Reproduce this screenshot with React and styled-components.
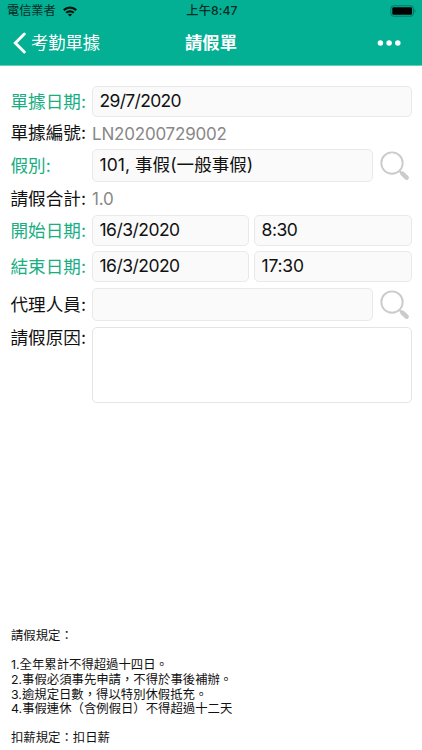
import React from "react";
import styled, { createGlobalStyle } from "styled-components";

const GlobalStyle = createGlobalStyle`
  * { box-sizing: border-box; }
  html, body { margin: 0; padding: 0; background: #fff; }
  body { font-family: Inter, "Noto Sans CJK TC", sans-serif; color: #111; }
`;

const Screen = styled.main`
  display: flex;
  flex-direction: column;
  width: 422px;
  height: 750px;
  overflow: hidden;
  background: #fff;
`;

const Header = styled.header`
  flex: none;
  height: 66px;
  background: #03b094;
  border-bottom: 1px solid #62cdbc;
`;

const StatusBar = styled.div`
  display: grid;
  grid-template-columns: 1fr auto 1fr;
  align-items: center;
  height: 22px;
  padding: 0 5px 0 7px;
  font-size: 12.2px;
  line-height: 22px;
  color: #062c26;
`;

const Carrier = styled.div`
  display: flex;
  align-items: center;
  gap: 7px;
`;

const Clock = styled.div`
  font-weight: 500;
  letter-spacing: 0.1px;
  white-space: nowrap;
`;

const BatterySlot = styled.div`
  display: flex;
  justify-content: flex-end;
`;

const NavBar = styled.nav`
  display: grid;
  grid-template-columns: 1fr auto 1fr;
  align-items: center;
  height: 42px;
  padding: 0 21px 0 12px;
  color: #fff;
`;

const BackButton = styled.button`
  display: flex;
  align-items: center;
  gap: 5px;
  padding: 0;
  border: 0;
  background: none;
  color: inherit;
  font: 400 17.3px/24px Inter, "Noto Sans CJK TC", sans-serif;
`;

const Title = styled.h1`
  margin: 0;
  padding-left: 9px;
  font-size: 17.3px;
  line-height: 24px;
  font-weight: 700;
`;

const MoreButton = styled.button`
  display: flex;
  justify-self: end;
  padding: 0;
  border: 0;
  background: none;
`;

const Form = styled.form`
  display: flex;
  flex-direction: column;
  padding: 20px 10px 0 10.5px;
`;

const Row = styled.div`
  display: grid;
  grid-template-columns: 75.5px 1fr;
  column-gap: 6px;
  align-items: ${(p) => (p.$top ? "start" : "center")};
  height: ${(p) => p.$height}px;
  margin-bottom: ${(p) => p.$gap || 0}px;
`;

const Label = styled.label`
  font-size: 17.6px;
  line-height: 22px;
  font-weight: 400;
  white-space: nowrap;
  color: ${(p) => (p.$required ? "#18ae82" : "#111")};
`;

const Value = styled.span`
  padding-top: 1px;
  font-size: 17px;
  line-height: 22px;
  letter-spacing: -0.2px;
  color: #888;
`;

const Fields = styled.div`
  display: grid;
  grid-template-columns: ${(p) => p.$columns || "1fr"};
  column-gap: ${(p) => p.$gap || 6}px;
  height: 100%;
  align-items: center;
`;

const Field = styled.div`
  display: flex;
  align-items: center;
  height: 100%;
  padding: 0 0 1px 6.5px;
  border: 1px solid #e9e9e9;
  border-radius: 5px;
  background: #fafafa;
  font-size: 17.5px;
  line-height: 22px;
  letter-spacing: ${(p) => p.$spacing || 0}px;
  white-space: nowrap;
`;

const TextArea = styled.textarea`
  display: block;
  width: 320px;
  height: 76px;
  padding: 6px;
  resize: none;
  outline: 0;
  border: 1px solid #e4e4e4;
  border-radius: 5px;
  background: #fff;
`;

const SearchButton = styled.button`
  display: flex;
  padding: 0;
  border: 0;
  background: none;
`;

const Rules = styled.section`
  margin-top: auto;
  padding: 0 10px 4px 11px;
  font-size: 12.37px;
  line-height: 14.6px;
  white-space: pre-line;
`;

const WifiIcon = () => (
  <svg width="14" height="11" viewBox="0 0 14 11" fill="none" stroke="#02110e" strokeWidth="2.2">
    <path d="M.8 4.1c3.5-3.3 8.9-3.3 12.4 0M3.2 6.8c2.1-2 5.5-2 7.6 0" />
    <path d="M7 10.6 4.9 8.5c1.2-1.1 3-1.1 4.2 0Z" fill="#02110e" stroke="none" />
  </svg>
);

const BatteryIcon = () => (
  <svg width="27" height="12" viewBox="0 0 27 12">
    <rect x=".9" y=".8" width="22.6" height="10.4" rx="2.6" fill="none" stroke="#067361" />
    <rect x="2.3" y="2.3" width="19.8" height="7.4" rx="1.2" fill="#000" />
    <path d="M24.6 4.2c1.4.5 1.4 3.1 0 3.6Z" fill="#067361" />
  </svg>
);

const BackIcon = () => (
  <svg width="14" height="22" viewBox="0 0 14 22" fill="none" stroke="#fff" strokeWidth="2.9" strokeLinecap="round">
    <path d="M12.3 2 3.3 11l9 9" strokeLinejoin="miter" />
  </svg>
);

const MoreIcon = () => (
  <svg width="24" height="6" viewBox="0 0 24 6" fill="#fff">
    <circle cx="3.4" cy="3" r="2.75" />
    <circle cx="12.1" cy="3" r="2.75" />
    <circle cx="20.8" cy="3" r="2.75" />
  </svg>
);

const SearchIcon = () => (
  <svg width="31" height="31" viewBox="0 0 31 31" fill="none" stroke="#cbcbcb">
    <circle cx="13" cy="13.1" r="10.7" strokeWidth="1.9" />
    <path d="m20.5 21 2.2 2.2" strokeWidth="2" />
    <path d="m23.4 23.6 4.2 4" strokeWidth="4.6" strokeLinecap="round" />
  </svg>
);

const Search = () => (
  <SearchButton type="button" aria-label="搜尋">
    <SearchIcon />
  </SearchButton>
);

export default function App() {
  return (
    <>
      <GlobalStyle />
      <Screen>
        <Header>
          <StatusBar>
            <Carrier>
              電信業者
              <WifiIcon />
            </Carrier>
            <Clock>上午8:47</Clock>
            <BatterySlot>
              <BatteryIcon />
            </BatterySlot>
          </StatusBar>
          <NavBar>
            <BackButton>
              <BackIcon />
              考勤單據
            </BackButton>
            <Title>請假單</Title>
            <MoreButton aria-label="更多">
              <MoreIcon />
            </MoreButton>
          </NavBar>
        </Header>

        <Form>
          <Row $height={31}>
            <Label $required>單據日期:</Label>
            <Field $spacing={-0.68}>29/7/2020</Field>
          </Row>
          <Row $height={32}>
            <Label>單據編號:</Label>
            <Value>LN20200729002</Value>
          </Row>
          <Row $height={33}>
            <Label $required>假別:</Label>
            <Fields $columns="281px 31px">
              <Field $spacing={0.06}>101, 事假(一般事假)</Field>
              <Search />
            </Fields>
          </Row>
          <Row $height={33}>
            <Label>請假合計:</Label>
            <Value>1.0</Value>
          </Row>
          <Row $height={31} $gap={5}>
            <Label $required>開始日期:</Label>
            <Fields $columns="157px 1fr" $gap={5}>
              <Field $spacing={-0.53}>16/3/2020</Field>
              <Field $spacing={-0.45}>8:30</Field>
            </Fields>
          </Row>
          <Row $height={31} $gap={6}>
            <Label $required>結束日期:</Label>
            <Fields $columns="157px 1fr" $gap={5}>
              <Field $spacing={-0.53}>16/3/2020</Field>
              <Field $spacing={-0.2}>17:30</Field>
            </Fields>
          </Row>
          <Row $height={33} $gap={6}>
            <Label>代理人員:</Label>
            <Fields $columns="281px 31px">
              <Field />
              <Search />
            </Fields>
          </Row>
          <Row $height={76} $top>
            <Label>請假原因:</Label>
            <TextArea />
          </Row>
        </Form>

        <Rules>
          {`請假規定：

            1.全年累計不得超過十四日。
            2.事假必須事先申請，不得於事後補辦。
            3.逾規定日數，得以特別休假抵充。
            4.事假連休（含例假日）不得超過十二天

            扣薪規定：扣日薪`}
        </Rules>
      </Screen>
    </>
  );
}
